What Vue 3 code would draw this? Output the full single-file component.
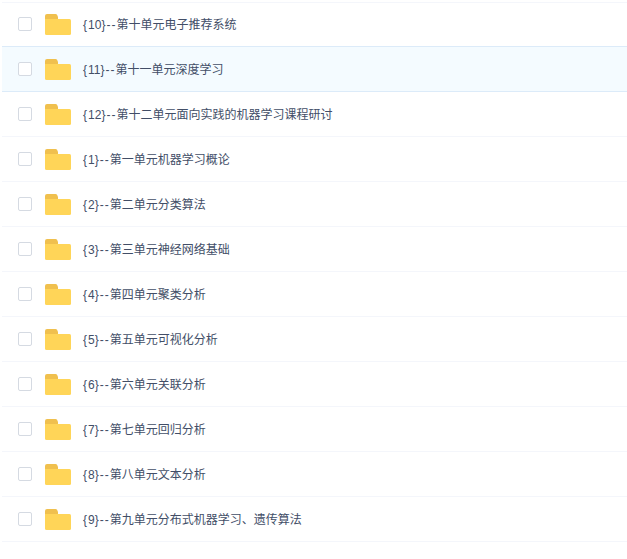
<script setup>
const titles = [
  '{10}--第十单元电子推荐系统',
  '{11}--第十一单元深度学习',
  '{12}--第十二单元面向实践的机器学习课程研讨',
  '{1}--第一单元机器学习概论',
  '{2}--第二单元分类算法',
  '{3}--第三单元神经网络基础',
  '{4}--第四单元聚类分析',
  '{5}--第五单元可视化分析',
  '{6}--第六单元关联分析',
  '{7}--第七单元回归分析',
  '{8}--第八单元文本分析',
  '{9}--第九单元分布式机器学习、遗传算法',
]
const rows = titles.map((t) => {
  const m = t.match(/^\{(\d+)\}--(.*)$/)
  return { key: t, num: m[1], title: m[2] }
})
</script>

<template>
  <div class="list">
    <div v-for="(r, i) in rows" :key="r.key" class="row" :class="{ hover: i === 1 }">
      <span class="check"></span>
      <svg class="folder" width="26" height="21" viewBox="0 0 26 21">
        <path d="M0 2a2 2 0 0 1 2-2h8.5a2 2 0 0 1 1.6.8L13 3v4H0z" fill="#f0c04e" />
        <path d="M0 5h24.5a1.5 1.5 0 0 1 1.5 1.5v13a1.5 1.5 0 0 1-1.5 1.5H1.5A1.5 1.5 0 0 1 0 19.5z" fill="#ffd558" />
      </svg>
      <span class="name"><span class="mark">{</span>{{ r.num }}<span class="mark">}--</span>{{ r.title }}</span>
    </div>
  </div>
</template>

<style>
html, body { background: #fff; margin: 0; }
</style>

<style scoped>
.list {
  width: 625px;
  margin-left: 2px;
  padding-top: 2px;
  font-family: "Liberation Sans", "Noto Sans CJK SC", sans-serif;
}
.row {
  height: 44px;
  border-top: 1px solid #f4f6fb;
  display: flex;
  align-items: center;
  padding-left: 16px;
}
.row:first-child { height: 42px; padding-bottom: 1px; }
.row:last-child { border-bottom: 1px solid #f4f6fb; }
.hover { background: #f4fbff; border-top-color: #dcebf9; }
.hover + .row { border-top-color: #dcebf9; }
.check {
  width: 12px;
  height: 12px;
  border: 1px solid #d5dae2;
  border-radius: 2px;
  background: #fff;
  flex: none;
}
.folder { margin: 1px 0 0 13px; flex: none; }
.name {
  margin: 0 0 2px 12px;
  font-size: 12px;
  color: #424e67;
  white-space: nowrap;
}
.mark { letter-spacing: 1px; }
</style>
